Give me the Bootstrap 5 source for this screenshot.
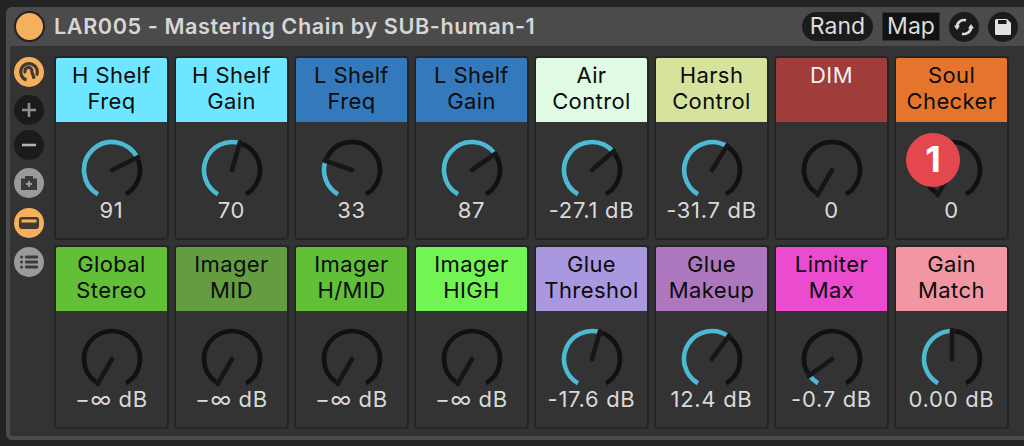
<!DOCTYPE html>
<html lang="en">
<head>
    <meta charset="UTF-8">
    <title>LAR005 - Mastering Chain</title>
    <link href="https://cdn.jsdelivr.net/npm/bootstrap@5.3.0/dist/css/bootstrap.min.css" rel="stylesheet">
    <style>
        html, body { height: 100%; }
        body { background: #232323; font-family: Inter, "Liberation Sans", sans-serif; overflow: hidden; padding: 7px 0 6px 6px; }
        .rack { width: 1018px; height: 433px; background: #4b4b4b; border-radius: 6px 0 0 6px; padding: 0 0 4px 4px; }
        .rack-title { height: 39px; padding: 0 6px 0 4px; }
        .title-dot { width: 31px; height: 31px; border-radius: 50%; background: #f5b05e; border: 2px solid #222; }
        .title-text { color: #d6d6d6; font-size: 21.7px; font-weight: 600; letter-spacing: .55px; margin-left: 9px; white-space: nowrap; }
        .pill-btn { height: 29px; background: #1b1b1b; color: #dcdcdc; font-size: 23px; line-height: 28px; }
        .rand-btn { width: 71px; border-radius: 15px; }
        .map-btn { width: 58px; margin-left: 9px; border: 1px solid #303030; background: #121212; line-height: 26px; }
        .round-btn { width: 30px; height: 30px; border-radius: 50%; background: #1b1b1b; }
        .title-round { margin-left: 9px; }
        .rack-body { background: #333; height: 390px; padding: 10px 0 0 4px; border-radius: 2px 0 0 2px; }
        .side-col { width: 30px; margin-right: 10px; }
        .side-col .round-btn { margin-top: 8px; }
        .side-col .round-btn:first-child { margin-top: 1px; }
        .side-col .round-btn:last-child { margin-top: 9px; }
        .side-col .btn-orange { background: #f5b05e; }
        .side-col .btn-grey { background: #9a9a9a; }
        .side-col .tight { margin-top: 5px; }
        .side-col .wide { margin-top: 10px; }
        #knobs { gap: 5px; width: 960px; }
        .knob-card { width: 115px; height: 184px; background: #333; border: 2px solid #252525; border-radius: 4px; }
        .knob-head { height: 64px; padding-top: 5px; border-radius: 2px 2px 0 0; font-size: 22px; letter-spacing: .4px; line-height: 25.5px; text-align: center; color: #0c0c0c; white-space: nowrap; overflow: hidden; }
        .knob-svg { display: block; margin: 16px auto 0; }
        .knob-val { color: #d9d9d9; font-size: 22px; letter-spacing: .7px; line-height: 24px; text-align: center; margin-top: -4px; white-space: nowrap; }
        .note-badge { position: absolute; left: 906px; top: 133px; width: 54px; height: 54px; border-radius: 50%; background: #e5474f; color: #fff; font-size: 36px; font-weight: 700; line-height: 52px; text-align: center; }
    </style>
</head>
<body class="position-relative">

<div class="rack">
    <div class="rack-title d-flex align-items-center">
        <div class="title-dot"></div>
        <div class="title-text flex-grow-1">LAR005 - Mastering Chain by SUB-human-1</div>
        <div class="pill-btn rand-btn text-center">Rand</div>
        <div class="pill-btn map-btn text-center">Map</div>
        <div class="round-btn title-round d-flex align-items-center justify-content-center">
            <svg width="20" height="20" viewBox="0 0 20 20" fill="none" stroke="#dcdcdc" stroke-width="2.6">
                <path d="M3 11 A7 7 0 0 1 12 3.3"/>
                <path d="M17 9 A7 7 0 0 1 8 16.7"/>
                <path d="M0 8.5 H6 L3 13 Z M20 11.5 H14 L17 7 Z" fill="#dcdcdc" stroke="none"/>
            </svg>
        </div>
        <div class="round-btn title-round d-flex align-items-center justify-content-center">
            <svg width="18" height="18" viewBox="0 0 18 18">
                <path d="M1 2.5 A1.5 1.5 0 0 1 2.5 1 H13 L17 5 V15.5 A1.5 1.5 0 0 1 15.5 17 H2.5 A1.5 1.5 0 0 1 1 15.5 Z" fill="#e2e2e2"/>
                <rect x="4" y="2" width="8.5" height="4" fill="#1b1b1b"/>
            </svg>
        </div>
    </div>
    <div class="rack-body d-flex">
        <div class="side-col d-flex flex-column align-items-center flex-shrink-0">
            <div class="round-btn btn-orange d-flex align-items-center justify-content-center">
                <svg width="22" height="22" viewBox="0 0 22 22" fill="none" stroke="#403a30" stroke-width="3.2">
                    <path d="M8.5 19 A8.4 8.4 0 1 1 18.6 14.6"/>
                    <path d="M7.6 12 A3.5 3.5 0 1 1 13.8 10.8 L16.2 17.6"/>
                </svg>
            </div>
            <div class="round-btn d-flex align-items-center justify-content-center">
                <svg width="14" height="14" viewBox="0 0 14 14" stroke="#8e8e8e" stroke-width="2.6"><path d="M7 0 V14 M0 7 H14"/></svg>
            </div>
            <div class="round-btn tight d-flex align-items-center justify-content-center">
                <svg width="14" height="14" viewBox="0 0 14 14" stroke="#b4b4b4" stroke-width="2.6"><path d="M0 7 H14"/></svg>
            </div>
            <div class="round-btn btn-grey d-flex align-items-center justify-content-center">
                <svg width="18" height="16" viewBox="0 0 18 16">
                    <path d="M1 3.5 H5 V1 H13 V3.5 H17 V15 H1 Z" fill="#3a3a3a"/>
                    <path d="M9 6 V12 M6 9 H12" stroke="#9a9a9a" stroke-width="2"/>
                </svg>
            </div>
            <div class="round-btn btn-orange wide d-flex align-items-center justify-content-center">
                <svg width="20" height="12" viewBox="0 0 20 12">
                    <rect width="20" height="12" rx="3" fill="#403a30"/>
                    <rect x="2.5" y="2.5" width="15" height="3" fill="#f5b05e"/>
                </svg>
            </div>
            <div class="round-btn btn-grey d-flex align-items-center justify-content-center">
                <svg width="18" height="14" viewBox="0 0 18 14" fill="#3a3a3a">
                    <rect x="0" y="0.5" width="3" height="3" rx="1.5"/><rect x="5" y="0.5" width="13" height="3" rx="1"/>
                    <rect x="0" y="5.5" width="3" height="3" rx="1.5"/><rect x="5" y="5.5" width="13" height="3" rx="1"/>
                    <rect x="0" y="10.5" width="3" height="3" rx="1.5"/><rect x="5" y="10.5" width="13" height="3" rx="1"/>
                </svg>
            </div>
        </div>
        <div id="knobs" class="d-flex flex-wrap align-content-start"></div>
    </div>
</div>

<div class="note-badge">1</div>

<script>
    const knobs = [
        ["H Shelf<br>Freq", "#6ee6ff", 64, "91"],
        ["H Shelf<br>Gain", "#6ee6ff", 16, "70"],
        ["L Shelf<br>Freq", "#3479bb", -71, "33"],
        ["L Shelf<br>Gain", "#3479bb", 55, "87"],
        ["Air<br>Control", "#dffbe3", 49, "-27.1 dB"],
        ["Harsh<br>Control", "#d6e39c", 32, "-31.7 dB"],
        ["DIM", "#a03c3a", -150, "0", "#f2f2f2"],
        ["Soul<br>Checker", "#e5752c", -150, "0"],
        ["Global<br>Stereo", "#62bf38", -150, "\u2212\u221e dB"],
        ["Imager<br>MID", "#649c40", -150, "\u2212\u221e dB"],
        ["Imager<br>H/MID", "#62bf38", -150, "\u2212\u221e dB"],
        ["Imager<br>HIGH", "#72f552", -150, "\u2212\u221e dB"],
        ["Glue<br>Threshol", "#a997e0", 16, "-17.6 dB"],
        ["Glue<br>Makeup", "#ad77bd", 36, "12.4 dB"],
        ["Limiter<br>Max", "#ea4bcf", -126, "-0.7 dB"],
        ["Gain<br>Match", "#f296a4", 0, "0.00 dB"]
    ];

    // point on the dial, angle in degrees clockwise from the top
    function pt(r, deg) {
        const a = deg * Math.PI / 180;
        return (32 + r * Math.sin(a)).toFixed(2) + " " + (32 - r * Math.cos(a)).toFixed(2);
    }

    function arc(from, to, color) {
        if (to - from < 1) return "";
        const large = to - from > 180 ? 1 : 0;
        return `<path d="M${pt(28, from)} A28 28 0 ${large} 1 ${pt(28, to)}" stroke="${color}"/>`;
    }

    let html = "";
    knobs.forEach(([name, color, angle, value, text]) => {
        const headStyle = text ? `background:${color};color:${text}` : `background:${color}`;
        html += `
            <div class="knob-card">
                <div class="knob-head" style="${headStyle}">${name}</div>
                <svg class="knob-svg" width="64" height="64" viewBox="0 0 64 64" fill="none" stroke-width="4.6">
                    ${arc(-150, angle, "#4db9d2")}
                    ${arc(angle + 5, 150, "#111")}
                    <path d="M32 32 L${pt(29, angle)}" stroke="#161616" stroke-width="4.6" stroke-linecap="round"/>
                </svg>
                <div class="knob-val">${value}</div>
            </div>`;
    });
    document.getElementById("knobs").innerHTML = html;
</script>
<script src="https://cdn.jsdelivr.net/npm/bootstrap@5.3.0/dist/js/bootstrap.bundle.min.js"></script>
</body>
</html>
